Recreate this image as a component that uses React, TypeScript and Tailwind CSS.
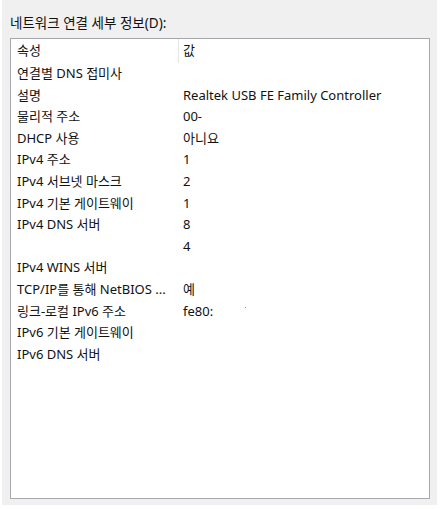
const rows: [string, string][] = [
  ["연결별 DNS 접미사", ""],
  ["설명", "Realtek USB FE Family Controller"],
  ["물리적 주소", "00-"],
  ["DHCP 사용", "아니요"],
  ["IPv4 주소", "1"],
  ["IPv4 서브넷 마스크", "2"],
  ["IPv4 기본 게이트웨이", "1"],
  ["IPv4 DNS 서버", "8"],
  ["", "4"],
  ["IPv4 WINS 서버", ""],
  ["TCP/IP를 통해 NetBIOS ...", "예"],
  ["링크-로컬 IPv6 주소", "fe80:"],
  ["IPv6 기본 게이트웨이", ""],
  ["IPv6 DNS 서버", ""],
];

export default function App() {
  return (
    <div
      className="h-[509px] w-[441px] bg-white text-[13px] text-[#111]"
      style={{ fontFamily: '"Noto Sans", "Noto Sans CJK KR", sans-serif' }}
    >
      <div className="ml-[2px] flex h-[505px] w-[435px] flex-col bg-[#f0f0f0]">
        {/* 레이블 */}
        <div className="mt-[13px] ml-[8px] h-[25px] text-[13.5px] leading-[20px]">
          네트워크 연결 세부 정보(D):
        </div>

        {/* 목록 */}
        <div className="ml-[8px] h-[461px] w-[420px] border border-[#a7a7ad] bg-white">
          <div className="flex h-[24px] items-center">
            <div className="flex h-full w-[168px] items-center border-r border-[#e5e5e5] pl-[6px]">
              속성
            </div>
            <div className="pl-[4px]">값</div>
          </div>
          {rows.map(([name, value], i) => (
            <div key={i} className="flex h-[21.6px] items-center">
              <div className="w-[168px] whitespace-nowrap pl-[6px]">{name}</div>
              <div className="flex items-center whitespace-nowrap pl-[4px]">
                {value}
                {value === "fe80:" && (
                  <span className="ml-[32px] mb-[8px] inline-block h-[1px] w-[1px] bg-[#999]" />
                )}
              </div>
            </div>
          ))}
        </div>
      </div>
    </div>
  );
}
